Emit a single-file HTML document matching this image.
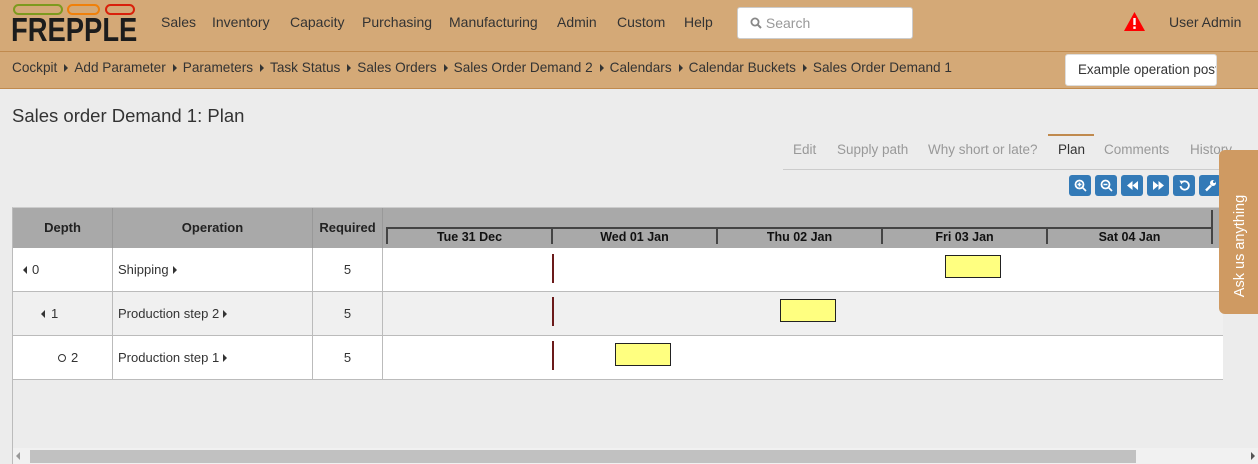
<!DOCTYPE html>
<html><head><meta charset="utf-8"><style>
*{box-sizing:border-box;margin:0;padding:0}
body{width:1258px;height:464px;overflow:hidden;background:#ececec;font-family:"Liberation Sans",sans-serif;color:#333;position:relative;font-size:13px}
.a{position:absolute;white-space:nowrap}
#hdr{left:0;top:0;width:1258px;height:52px;background:#d4a977;border-bottom:1px solid #c08a4e}
#bc{left:0;top:52px;width:1258px;height:37px;background:#d4a977;border-bottom:1px solid #c08a4e}
.nav{top:14px;font-size:14px;color:#333}
.tri{display:inline-block;width:0;height:0;border-top:4px solid transparent;border-bottom:4px solid transparent;border-left:4px solid #333;margin:0 6px 0 7px;vertical-align:0}
.tab{top:142px;font-size:13.5px;color:#999}
.btn{top:175px;width:22px;height:21px;background:#337ab7;border-radius:3px}
.btn svg{display:block;margin:4px auto 0}
.cell{position:absolute;border-right:1px solid #bbb;border-bottom:1px solid #bbb;font-size:13px;line-height:43px}
.hc{position:absolute;top:208px;height:40px;background:#a9a9a9;border-right:1px solid #999;font-weight:bold;font-size:13px;color:#222;text-align:center;line-height:40px}
.day{position:absolute;top:227px;height:17px;width:165px;border-left:2px solid #444;border-top:2px solid #444;text-align:center;font-weight:bold;font-size:12.5px;line-height:16px;color:#111}
.bar{position:absolute;width:56px;height:23px;background:#ffff80;border:1px solid #222}
.red{position:absolute;left:552px;width:2px;height:29px;background:#6b1a1a}
</style></head><body>
<div id="hdr" class="a"></div>
<div id="bc" class="a"></div>
<!-- logo -->
<div class="a" style="left:13px;top:4px;width:50px;height:11px;border:2.5px solid #7d9a1e;border-radius:6px"></div>
<div class="a" style="left:67px;top:4px;width:33px;height:11px;border:2.5px solid #f0800a;border-radius:6px"></div>
<div class="a" style="left:105px;top:4px;width:30px;height:11px;border:2.5px solid #d9200a;border-radius:6px"></div>
<div class="a" style="left:11px;top:11px;font-size:33px;font-weight:bold;color:#1c1c1c;font-family:'Liberation Sans',sans-serif;transform:scaleX(0.83);transform-origin:left">FREPPLE</div>
<div class="a nav" style="left:161px">Sales</div>
<div class="a nav" style="left:212px">Inventory</div>
<div class="a nav" style="left:290px">Capacity</div>
<div class="a nav" style="left:362px">Purchasing</div>
<div class="a nav" style="left:449px">Manufacturing</div>
<div class="a nav" style="left:557px">Admin</div>
<div class="a nav" style="left:617px">Custom</div>
<div class="a nav" style="left:684px">Help</div>
<div class="a" style="left:737px;top:7px;width:176px;height:32px;background:#fff;border:1px solid #ccc;border-radius:3px;font-size:14px;color:#999;padding:7px 0 0 12px"><svg width="12" height="12" viewBox="0 0 12 12" style="vertical-align:-1px"><circle cx="5" cy="5" r="3.6" fill="none" stroke="#888" stroke-width="1.8"/><path d="M7.7 7.7L11 11" stroke="#888" stroke-width="2"/></svg> Search</div>
<svg class="a" style="left:1124px;top:12px" width="21" height="19" viewBox="0 0 21 19"><path d="M10.5 0L21 19H0Z" fill="#f00"/><rect x="9.3" y="6" width="2.4" height="7" fill="#fff"/><rect x="9.3" y="14.5" width="2.4" height="2.4" fill="#fff"/></svg>
<div class="a nav" style="left:1169px">User Admin</div>
<div class="a" style="left:12px;top:60px;font-size:13.6px;color:#333">Cockpit<span class="tri"></span>Add Parameter<span class="tri"></span>Parameters<span class="tri"></span>Task Status<span class="tri"></span>Sales Orders<span class="tri"></span>Sales Order Demand 2<span class="tri"></span>Calendars<span class="tri"></span>Calendar Buckets<span class="tri"></span>Sales Order Demand 1</div>
<div class="a" style="left:1065px;top:54px;width:152px;height:32px;background:#fff;border:1px solid #ddd;border-radius:3px;font-size:13.4px;color:#333;padding:7px 0 0 12px;overflow:hidden">Example operation posttime</div>
<div class="a" style="left:12px;top:105px;font-size:18.5px;color:#333">Sales order Demand 1: Plan</div>
<div class="a tab" style="left:793px">Edit</div>
<div class="a tab" style="left:837px">Supply path</div>
<div class="a tab" style="left:928px">Why short or late?</div>
<div class="a tab" style="left:1058px;color:#333">Plan</div>
<div class="a tab" style="left:1104px">Comments</div>
<div class="a tab" style="left:1190px">History</div>
<div class="a" style="left:1048px;top:134px;width:46px;height:2px;background:#c08a4e"></div>
<div class="a" style="left:783px;top:169px;width:440px;height:1px;background:#ccc"></div>
<div class="a btn" style="left:1069px"><svg width="13" height="13" viewBox="0 0 13 13"><circle cx="5.5" cy="5.5" r="4" fill="none" stroke="#fff" stroke-width="1.8"/><path d="M8.5 8.5L12 12M3.5 5.5h4M5.5 3.5v4" stroke="#fff" stroke-width="1.6"/></svg></div>
<div class="a btn" style="left:1095px"><svg width="13" height="13" viewBox="0 0 13 13"><circle cx="5.5" cy="5.5" r="4" fill="none" stroke="#fff" stroke-width="1.8"/><path d="M8.5 8.5L12 12M3.5 5.5h4" stroke="#fff" stroke-width="1.6"/></svg></div>
<div class="a btn" style="left:1121px"><svg width="13" height="13" viewBox="0 0 13 13"><path d="M6.5 2L1 6.5 6.5 11ZM12 2L6.5 6.5 12 11Z" fill="#fff"/></svg></div>
<div class="a btn" style="left:1147px"><svg width="13" height="13" viewBox="0 0 13 13"><path d="M1 2L6.5 6.5 1 11ZM6.5 2L12 6.5 6.5 11Z" fill="#fff"/></svg></div>
<div class="a btn" style="left:1173px"><svg width="13" height="13" viewBox="0 0 13 13"><path d="M4 3.2A4.2 4.2 0 1 1 2.5 7" fill="none" stroke="#fff" stroke-width="1.8"/><path d="M1.5 1.5L5.5 2 3.5 5.5Z" fill="#fff"/></svg></div>
<div class="a btn" style="left:1199px"><svg width="13" height="13" viewBox="0 0 13 13"><path d="M2 11.5L7 6.5" stroke="#fff" stroke-width="2.4"/><circle cx="9" cy="4" r="3" fill="#fff"/><circle cx="10.3" cy="2.7" r="1.3" fill="#337ab7"/></svg></div>
<!-- grid -->
<div class="a" style="left:12px;top:207px;width:1210px;height:257px;border-left:1px solid #bbb;border-top:1px solid #ccc"></div>
<div class="hc" style="left:13px;width:100px">Depth</div>
<div class="hc" style="left:113px;width:200px">Operation</div>
<div class="hc" style="left:313px;width:70px">Required</div>
<div class="hc" style="left:383px;width:840px;border-right:none"></div>
<div class="a" style="left:1211px;top:210px;width:2px;height:34px;background:#444"></div>
<div class="day" style="left:386px">Tue 31 Dec</div>
<div class="day" style="left:551px">Wed 01 Jan</div>
<div class="day" style="left:716px">Thu 02 Jan</div>
<div class="day" style="left:881px">Fri 03 Jan</div>
<div class="day" style="left:1046px">Sat 04 Jan</div>
<!-- rows -->
<div class="a" style="left:13px;top:248px;width:1210px;height:44px;background:#fff"></div>
<div class="a" style="left:13px;top:292px;width:1210px;height:44px;background:#f0f0f0"></div>
<div class="a" style="left:13px;top:336px;width:1210px;height:44px;background:#fff"></div>
<div class="cell" style="left:13px;top:248px;width:100px;height:44px;padding-left:10px"><span style="display:inline-block;border-top:4px solid transparent;border-bottom:4px solid transparent;border-right:4px solid #333;margin-right:5px"></span>0</div>
<div class="cell" style="left:113px;top:248px;width:200px;height:44px;padding-left:5px">Shipping<span class="tri" style="margin-left:4px"></span></div>
<div class="cell" style="left:313px;top:248px;width:70px;height:44px;text-align:center">5</div>
<div class="cell" style="left:383px;top:248px;width:840px;height:44px;border-right:none"></div>
<div class="cell" style="left:13px;top:292px;width:100px;height:44px;padding-left:28px"><span style="display:inline-block;border-top:4px solid transparent;border-bottom:4px solid transparent;border-right:4px solid #333;margin-right:6px"></span>1</div>
<div class="cell" style="left:113px;top:292px;width:200px;height:44px;padding-left:5px">Production step 2<span class="tri" style="margin-left:4px"></span></div>
<div class="cell" style="left:313px;top:292px;width:70px;height:44px;text-align:center">5</div>
<div class="cell" style="left:383px;top:292px;width:840px;height:44px;border-right:none"></div>
<div class="cell" style="left:13px;top:336px;width:100px;height:44px;padding-left:45px"><span style="display:inline-block;width:8px;height:8px;border:1px solid #333;border-radius:50%;margin-right:5px"></span>2</div>
<div class="cell" style="left:113px;top:336px;width:200px;height:44px;padding-left:5px">Production step 1<span class="tri" style="margin-left:4px"></span></div>
<div class="cell" style="left:313px;top:336px;width:70px;height:44px;text-align:center">5</div>
<div class="cell" style="left:383px;top:336px;width:840px;height:44px;border-right:none"></div>
<div class="red" style="top:254px"></div>
<div class="red" style="top:297px"></div>
<div class="red" style="top:341px"></div>
<div class="bar" style="left:945px;top:255px"></div>
<div class="bar" style="left:780px;top:299px"></div>
<div class="bar" style="left:615px;top:343px"></div>
<!-- scrollbar -->
<div class="a" style="left:13px;top:448px;width:1245px;height:16px;background:#f1f1f1"></div>
<div class="a" style="left:30px;top:450px;width:1106px;height:13px;background:#c1c1c1"></div>
<div class="a" style="left:16px;top:452px;border-top:4px solid transparent;border-bottom:4px solid transparent;border-right:4px solid #999"></div>
<div class="a" style="left:1251px;top:452px;border-top:4px solid transparent;border-bottom:4px solid transparent;border-left:4px solid #555"></div>
<!-- ask tab -->
<div class="a" style="left:1219px;top:150px;width:45px;height:164px;background:#cf9a62;border-radius:6px 0 0 6px"></div>
<div class="a" style="left:1240px;top:246px;transform:translate(-50%,-50%) rotate(-90deg);color:#fff;font-size:14.5px">Ask us anything</div>
</body></html>
